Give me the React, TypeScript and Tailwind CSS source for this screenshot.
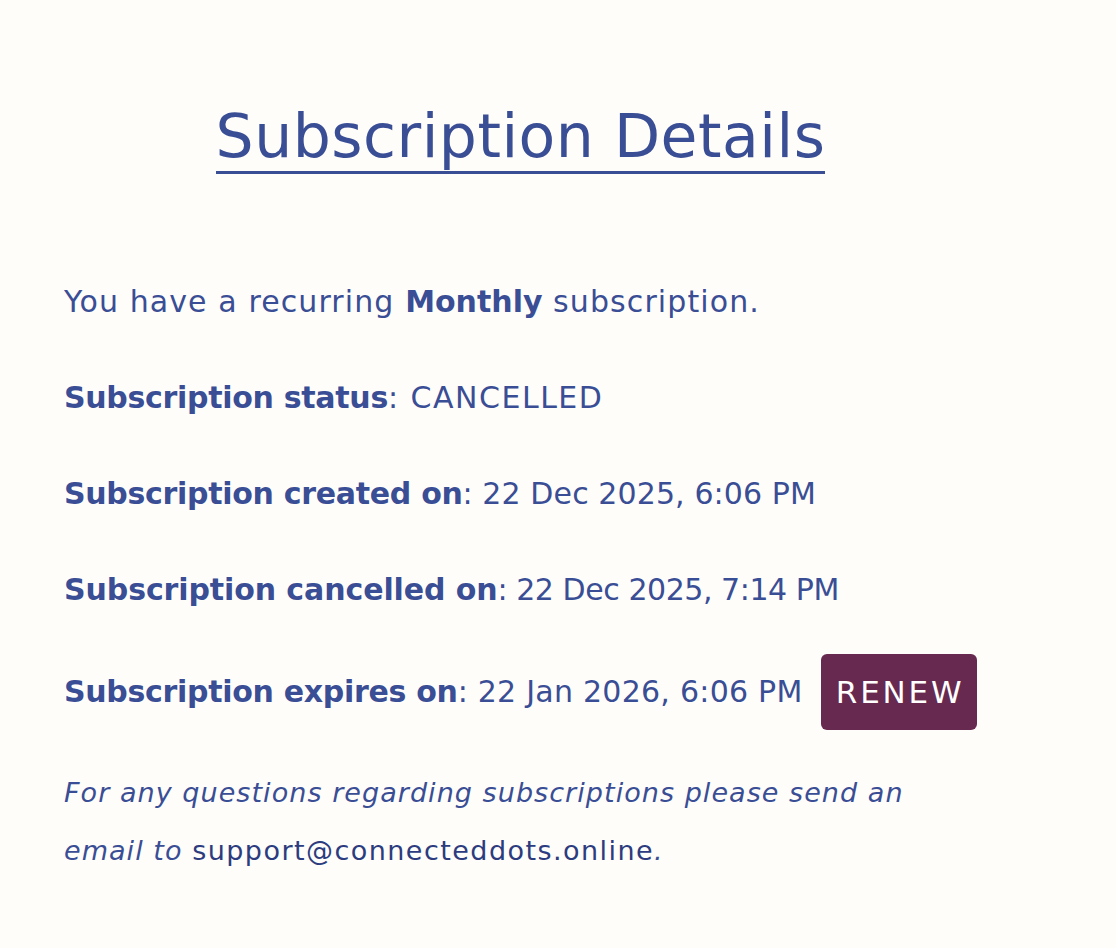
export default function App() {
  const label = "font-bold tracking-[-0.3px]";
  const txt = "tracking-[1.1px]";
  return (
    <div
      className="min-h-screen w-full bg-[#fffdfa] text-[#3a4e95]"
      style={{ fontFamily: "'DejaVu Sans', sans-serif" }}
    >
      <div className="w-[913px] ml-[64px] pt-[102px]">
        <div className="text-center">
          <h1 className="inline-block text-[60px] leading-[69px] font-normal tracking-[0.5px] border-b-[3px] border-[#3a4e95]">
            Subscription Details
          </h1>
        </div>

        <div className="mt-[108px] text-[30px] leading-[40px] whitespace-nowrap">
          <p>
            <span className={txt}>You have a recurring </span>
            <span className="font-bold">Monthly</span>
            <span className={txt}> subscription.</span>
          </p>
          <p className="mt-[56px]">
            <span className={label}>Subscription status</span>
            <span className="tracking-[1.5px]">: CANCELLED</span>
          </p>
          <p className="mt-[56px]">
            <span className={label}>Subscription created on</span>
            <span className="tracking-[0.1px]">: 22 Dec 2025, 6:06 PM</span>
          </p>
          <p className="mt-[56px]">
            <span className="font-bold tracking-[-0.1px]">Subscription cancelled on</span>
            <span className="tracking-[-0.45px]">: 22 Dec 2025, 7:14 PM</span>
          </p>
          <div className="mt-[44px] flex items-center gap-[18px]">
            <p>
              <span className={label}>Subscription expires on</span>
              <span className="tracking-[0.25px]">: 22 Jan 2026, 6:06 PM</span>
            </p>
            <button className="w-[156px] h-[76px] rounded-[6px] bg-[#67294f] text-white text-[31px] tracking-[2.8px] pl-[3px] flex items-center justify-center">
              RENEW
            </button>
          </div>
        </div>

        <div className="mt-[34px] text-[27px] leading-[58px]">
          <p className="italic tracking-[1.05px]">
            For any questions regarding subscriptions please send an
          </p>
          <p>
            <span className="italic tracking-[1.05px]">email to </span>
            <span className="text-[#2c3c7e] tracking-[1.45px]">support@connecteddots.online</span>
            <span className="italic">.</span>
          </p>
        </div>
      </div>
    </div>
  );
}
